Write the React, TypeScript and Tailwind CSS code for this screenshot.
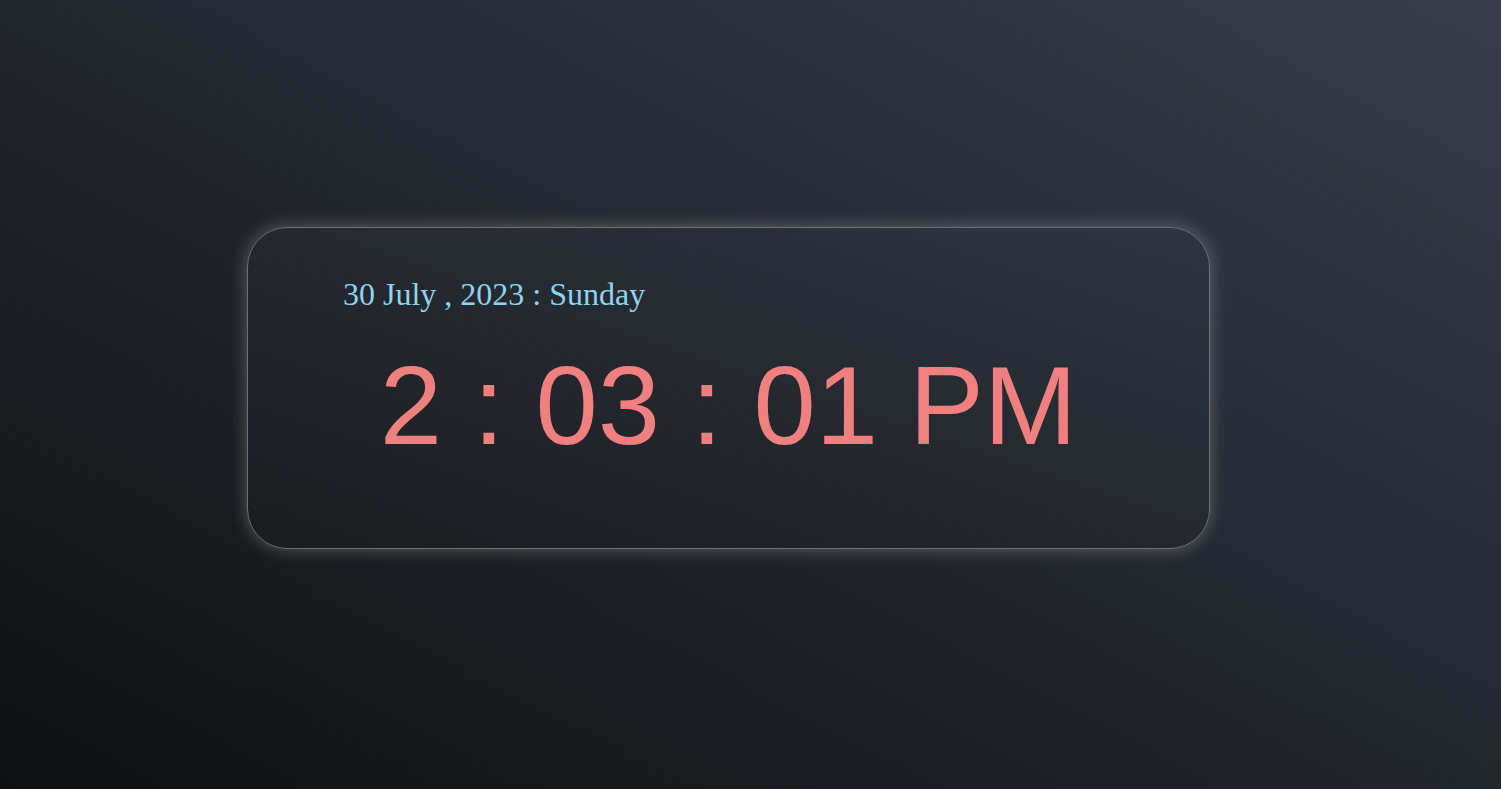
const Clock = () => {
  return (
    <div className="h-[322px] w-[963px] rounded-[40px] border border-[#6d7077] bg-gradient-to-tr from-[#1a1c1f] to-[#2f353f] px-[95px] pt-[50px] shadow-[0_0_18px_rgba(255,255,255,0.28)]">
      <p className="font-['Liberation_Serif',serif] text-[32px] leading-none text-[#8fd3f0]">
        30 July , 2023 : Sunday
      </p>
      <p className="mt-[40px] text-center font-['Liberation_Sans',Arial,sans-serif] text-[112px] leading-none text-[#f08080]">
        2 : 03 : 01 PM
      </p>
    </div>
  );
};

export default function App() {
  return (
    <div className="h-[789px] w-full overflow-hidden bg-gradient-to-tr from-[#0f1011] via-[#22262d] to-[#373e4a] pl-[247px] pt-[227px]">
      <Clock />
    </div>
  );
}
